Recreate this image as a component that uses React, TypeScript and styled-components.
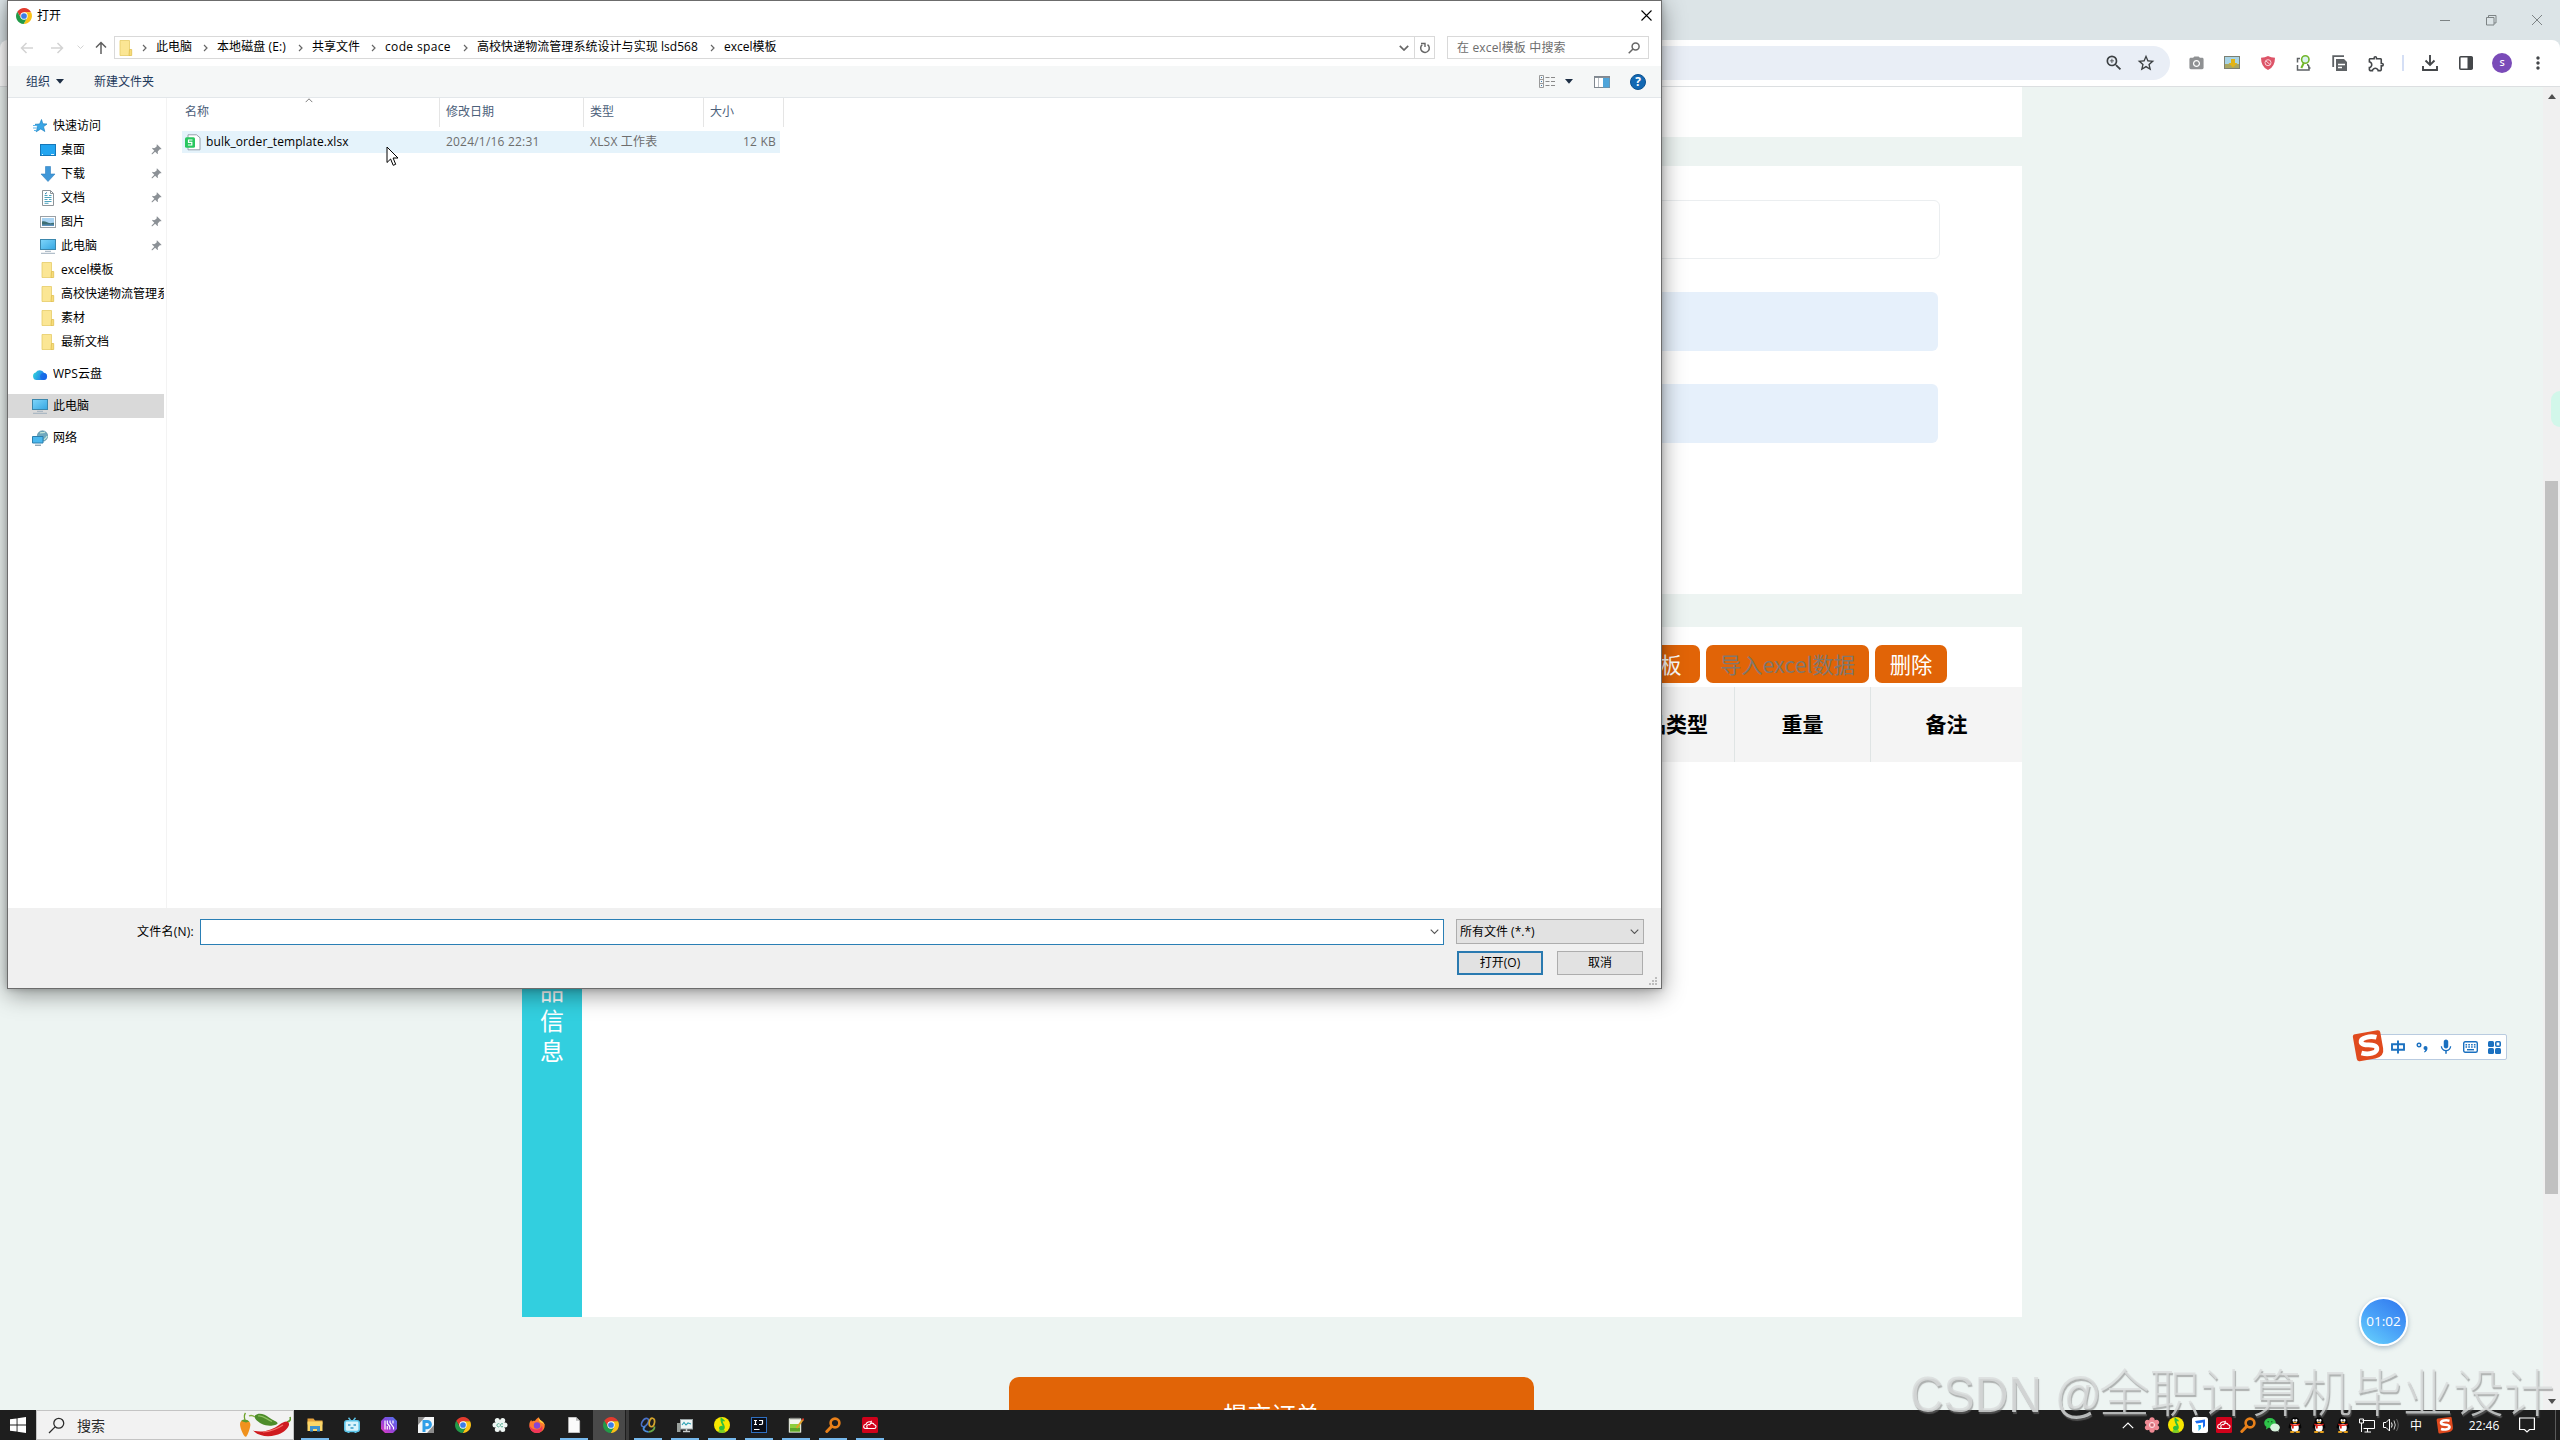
import React from "react";
import styled, { createGlobalStyle, css } from "styled-components";
import { MdZoomIn, MdStarBorder, MdPhotoCamera, MdOutlineExtension, MdMoreVert, MdMic, MdPushPin } from "react-icons/md";

const UI = `"Open Sans", "Noto Sans CJK SC", sans-serif`;
const CJK = `"Noto Sans CJK SC", sans-serif`;

const Global = createGlobalStyle`
  * { box-sizing: border-box; }
  html, body { margin: 0; padding: 0; overflow: hidden; }
  body { font-family: ${UI}; font-size: 12px; color: #000; }
  svg { display: block; flex: none; }
`;

const Desktop = styled.div`
  position: relative;
  width: 2560px;
  height: 1440px;
  overflow: hidden;
  display: flex;
  flex-direction: column;
  background: #edf4f2;
`;

/* ---------- browser ---------- */
const TabStrip = styled.header`
  height: 40px;
  flex: none;
  background: #dce4e7;
  display: flex;
  justify-content: flex-end;
  align-items: center;
  gap: 34px;
  padding-right: 17px;
`;
const ToolbarBack = styled.div`
  flex: none;
  background: #dce4e7;
`;
const BrowserToolbar = styled.div`
  height: 47px;
  background: #fff;
  border-bottom: 1px solid #dcdfe1;
  border-radius: 8px 8px 0 0;
  display: flex;
  align-items: center;
  padding: 0 4px 0 110px;
`;
const Omnibox = styled.div`
  flex: 1;
  height: 34px;
  border-radius: 17px;
  background: #e9eef6;
  display: flex;
  align-items: center;
  justify-content: flex-end;
  gap: 12px;
  padding-right: 14px;
  margin-right: 8px;
  color: #3c4043;
`;
const ToolSlot = styled.div`
  width: 36px;
  height: 36px;
  display: grid;
  place-items: center;
  color: #44474a;
`;
const ToolDivider = styled.div`
  width: 2px;
  height: 16px;
  margin: 0 8px;
  background: #d5dff5;
`;
const Avatar = styled.div`
  width: 20px;
  height: 20px;
  border-radius: 50%;
  background: #7a4bb8;
  color: #fff;
  font: 600 9.5px/20px "Open Sans", sans-serif;
  text-align: center;
`;

const Viewport = styled.main`
  flex: 1;
  min-height: 0;
  display: flex;
  overflow: hidden;
`;
const PageBody = styled.div`
  flex: 1;
  padding-left: 522px;
`;
const Card = styled.section<{ $h: number; $gap: number }>`
  width: 1500px;
  height: ${(p) => p.$h}px;
  margin-bottom: ${(p) => p.$gap}px;
  background: #fff;
`;
const FormCard = styled(Card)`
  padding: 34px 82px 0 0;
  display: flex;
  flex-direction: column;
  align-items: flex-end;
`;
const Field = styled.div<{ $filled?: boolean }>`
  width: 1240px;
  height: 59px;
  margin-bottom: 33px;
  border-radius: 6px;
  ${(p) =>
    p.$filled
      ? css`background: #e6f0fb; margin-right: 2px;`
      : css`border: 1px solid #ebeef0; background: #fff;`}
`;
const GoodsCard = styled(Card)`
  display: flex;
`;
const SideLabel = styled.div`
  width: 60px;
  background: #32cfdf;
  color: #fff;
  padding: 318px 18px 0;
  font: 24px/30px ${CJK};
`;
const Goods = styled.div`
  flex: 1;
  padding-top: 18px;
`;
const ActionRow = styled.div`
  display: flex;
  justify-content: flex-end;
  gap: 6px;
  padding-right: 75px;
  margin-bottom: 4px;
`;
const ActionButton = styled.div<{ $disabled?: boolean; $w: number }>`
  width: ${(p) => p.$w}px;
  height: 38px;
  border-radius: 7px;
  background: #e16407;
  color: ${(p) => (p.$disabled ? "#80776e" : "#fff")};
  font: 21.3px/38px ${CJK};
  text-align: center;
  white-space: nowrap;
`;
const GoodsHead = styled.div`
  display: grid;
  grid-template-columns: 1016px 137px 136px 151px;
  height: 75px;
  background: #f4f4f4;
`;
const HeadCell = styled.div`
  border-right: 1px solid #dfe4e4;
  font: 700 21px/73px ${CJK};
  text-align: center;
  &:last-child { border-right: 0; }
`;
const Submit = styled.div`
  width: 525px;
  height: 74px;
  margin: 60px 0 0 487px;
  border-radius: 10px;
  background: #e16407;
  color: #fff;
  font: 24px/74px ${CJK};
  text-align: center;
`;
const Scrollbar = styled.div`
  width: 17px;
  background: #f0f0f0;
  display: flex;
  flex-direction: column;
  align-items: center;
  padding: 7px 0 6px;
`;
const Thumb = styled.div`
  width: 13px;
  height: 713px;
  margin: 382px 0 auto;
  background: #c1c1c1;
`;

/* ---------- file dialog ---------- */
const Dialog = styled.div`
  position: absolute;
  left: 7px;
  top: 0;
  width: 1655px;
  height: 989px;
  border: 1px solid #6c6c6c;
  background: #fff;
  box-shadow: 0 5px 22px rgba(0, 0, 0, 0.42), 0 0 6px rgba(0, 0, 0, 0.2);
  display: flex;
  flex-direction: column;
  line-height: 16px;
`;
const TitleBar = styled.div`
  height: 35px;
  padding: 0 9px 6px 8px;
  display: flex;
  align-items: center;
  gap: 5px;
`;
const Spacer = styled.div`
  flex: 1;
`;
const NavRow = styled.div`
  height: 23px;
  display: flex;
  align-items: center;
  padding: 0 12px 0 12px;
`;
const NavIcons = styled.div`
  width: 94px;
  display: flex;
  align-items: center;
`;
const NavGap = styled.span<{ $w: number }>`
  width: ${(p) => p.$w}px;
`;
const AddressBox = styled.div`
  width: 1321px;
  height: 23px;
  border: 1px solid #d9d9d9;
  display: flex;
  align-items: center;
  padding-left: 3px;
`;
const Crumb = styled.span<{ $w: number; $ls: number }>`
  width: ${(p) => p.$w}px;
  padding-bottom: 1px;
  white-space: pre;
  letter-spacing: ${(p) => p.$ls}px;
`;
const CrumbArrow = styled.span<{ $first: boolean }>`
  width: 24px;
  margin-left: ${(p) => (p.$first ? -2 : 0)}px;
  display: flex;
  justify-content: center;
`;
const RefreshCell = styled.div`
  width: 20px;
  height: 21px;
  margin-left: 5px;
  border-left: 1px solid #d9d9d9;
  display: grid;
  place-items: center;
`;
const SearchBox = styled.div`
  width: 202px;
  height: 23px;
  margin-left: 12px;
  border: 1px solid #d9d9d9;
  display: flex;
  align-items: center;
  justify-content: space-between;
  padding: 0 8px 0 9px;
  color: #6d6d6d;
  letter-spacing: 0.15px;
`;
const CommandBar = styled.div`
  height: 32px;
  margin-top: 7px;
  background: #f5f7f7;
  border-bottom: 1px solid #e3e7ea;
  display: flex;
  align-items: center;
  padding: 0 15px 0 18px;
  color: #1e395b;
`;
const Command = styled.span<{ $w: number }>`
  width: ${(p) => p.$w}px;
  display: flex;
  align-items: center;
  gap: 6px;
`;
const CommandIcon = styled.span<{ $ml: number }>`
  margin-left: ${(p) => p.$ml}px;
`;
const DialogBody = styled.div`
  flex: 1;
  display: flex;
`;
const Tree = styled.nav`
  width: 159px;
  padding: 16px 2px 0 0;
  border-right: 1px solid #f3f3f3;
`;
const TreeItem = styled.div<{ $nested?: boolean; $selected?: boolean; $gap?: boolean }>`
  height: 24px;
  margin-top: ${(p) => (p.$gap ? 8 : 0)}px;
  padding-left: ${(p) => (p.$nested ? 32 : 24)}px;
  display: flex;
  align-items: center;
  gap: 5px;
  overflow: hidden;
  background: ${(p) => (p.$selected ? "#d9d9d9" : "transparent")};
`;
const TreeText = styled.span`
  flex: 1;
  min-width: 0;
  white-space: nowrap;
  overflow: hidden;
`;
const PinWrap = styled.span`
  transform: rotate(45deg);
  margin-right: 2px;
  color: #8c9196;
`;
const List = styled.div`
  padding-left: 11px;
`;
const ListHead = styled.div`
  display: grid;
  grid-template-columns: 262px 144px 120px 80px;
  height: 29px;
  margin-bottom: 4px;
  color: #4c607a;
`;
const ListHeadCell = styled.div<{ $first?: boolean }>`
  position: relative;
  padding: 6px 0 0 ${(p) => (p.$first ? 7 : 6)}px;
  border-right: 1px solid #e5e5e5;
`;
const SortMark = styled.div`
  position: absolute;
  left: 127px;
  top: 0;
  transform: scaleY(-1);
`;
const FileRow = styled.div`
  width: 598px;
  height: 22px;
  margin-left: 4px;
  display: grid;
  grid-template-columns: 21px 240px 144px 120px 66px;
  align-items: center;
  background: #e5f3fb;
  color: #6d6d6d;
  padding-left: 3px;
  letter-spacing: 0.2px;
`;
const ListWrap = styled.div`
  width: 606px;
`;
const FileName = styled.span`
  color: #000;
  letter-spacing: 0.1px;
`;
const SizeCell = styled.span`
  text-align: right;
`;
const Footer = styled.div`
  height: 80px;
  background: #f0f0f0;
  padding: 11px 17px 0 0;
  display: flex;
  flex-direction: column;
  gap: 6px;
`;
const FooterLine = styled.div`
  display: flex;
  align-items: flex-start;
  justify-content: flex-end;
`;
const FieldLabel = styled.label`
  width: 63px;
  line-height: 25px;
  letter-spacing: 0.25px;
  white-space: nowrap;
`;
const NameInput = styled.div`
  width: 1244px;
  height: 26px;
  border: 1px solid #2a7fb5;
  background: #fff;
  margin-right: 12px;
  display: flex;
  align-items: center;
  justify-content: flex-end;
  padding-right: 4px;
`;
const TypeSelect = styled.div`
  width: 188px;
  height: 25px;
  border: 1px solid #adadad;
  background: #e2e2e2;
  display: flex;
  align-items: center;
  justify-content: space-between;
  padding: 0 4px 0 3px;
`;
const DialogButton = styled.div<{ $primary?: boolean }>`
  width: 86px;
  height: 24px;
  border: ${(p) => (p.$primary ? "2px solid #2a7ab0" : "1px solid #adadad")};
  background: #e2e2e2;
  display: grid;
  place-items: center;
  margin-right: ${(p) => (p.$primary ? 14 : 1)}px;
`;
const Grip = styled.div`
  position: absolute;
  right: 3px;
  bottom: 2px;
`;
const Pointer = styled.div`
  position: absolute;
  left: 386px;
  top: 146px;
`;

/* ---------- floating widgets ---------- */
const ImeBar = styled.div`
  position: absolute;
  left: 2366px;
  top: 1034px;
  width: 141px;
  height: 26px;
  background: #fff;
  border: 1px solid #b9cbe0;
  border-radius: 2px;
  display: flex;
  align-items: center;
  padding-left: 19px;
  color: #1a70c0;
`;
const ImeCell = styled.div`
  width: 24px;
  display: grid;
  place-items: center;
`;
const ImeLogo = styled.div`
  position: absolute;
  left: 2352px;
  top: 1029px;
`;
const Timer = styled.div`
  position: absolute;
  left: 2359px;
  top: 1297px;
  width: 49px;
  height: 49px;
  border-radius: 50%;
  border: 2px solid #fff;
  background: linear-gradient(215deg, #3580f0 12%, #4aa2f8 52%, #66d0fc 95%);
  box-shadow: 0 2px 5px rgba(60, 90, 120, 0.35);
  color: #fff;
  font: 13.5px/45px "Open Sans", sans-serif;
  text-align: center;
`;
const EdgeTab = styled.div`
  position: absolute;
  left: 2551px;
  top: 391px;
  width: 20px;
  height: 36px;
  border-radius: 9px;
  background: #d2f7ea;
`;
const Watermark = styled.div`
  position: absolute;
  left: 1910px;
  top: 1359px;
  font: 50.6px/72px "Liberation Sans", "Noto Sans CJK SC", sans-serif;
  font-weight: 300;
  color: rgba(218, 220, 220, 0.8);
  text-shadow: 1px 2px 1px rgba(120, 120, 120, 0.55);
  white-space: pre;
  display: flex;
`;
const WmLatin = styled.span<{ $w: number; $sx: number }>`
  width: ${(p) => p.$w}px;
  transform: scaleX(${(p) => p.$sx});
  transform-origin: left;
`;

/* ---------- taskbar ---------- */
const Taskbar = styled.footer`
  flex: none;
  height: 30px;
  background: #1e1e1e;
  display: flex;
  align-items: stretch;
  color: #fff;
`;
const StartButton = styled.div`
  width: 36px;
  display: grid;
  place-items: center;
`;
const TaskSearch = styled.div`
  width: 258px;
  background: #f2f2f2;
  border: 1px solid #c4c4c4;
  display: flex;
  align-items: center;
  color: #2b2b2b;
  font-size: 14px;
  padding: 0 2px 0 11px;
  gap: 12px;
`;
const TaskItems = styled.div`
  display: flex;
  padding-left: 2px;
`;
const TaskItem = styled.div<{ $open?: boolean; $active?: boolean }>`
  width: 37px;
  padding-left: 11px;
  display: flex;
  align-items: center;
  ${(p) =>
    p.$active &&
    css`
      background: linear-gradient(#494949, #494949) 1px 0 / 32px 100% no-repeat,
        linear-gradient(#3b3b3b, #3b3b3b) 34px 0 / 3px 100% no-repeat;
    `}
  ${(p) =>
    p.$open &&
    css`
      background: linear-gradient(#76b9ed, #76b9ed) 5px 28px / 28px 2px no-repeat;
    `}
`;
const Tray = styled.div`
  display: flex;
  align-items: center;
`;
const TrayCell = styled.div<{ $w?: number }>`
  width: ${(p) => p.$w ?? 23.9}px;
  display: grid;
  place-items: center;
  white-space: nowrap;
`;
const Clock = styled(TrayCell)`
  font-size: 12px;
`;
const ShowDesktop = styled.div`
  width: 5px;
  margin-left: 9px;
  border-left: 1px solid #5a5a5a;
`;

/* ---------- icons ---------- */
const Chrome = ({ s = 16 }: { s?: number }) => (
  <svg width={s} height={s} viewBox="0 0 48 48">
    <path d="M24 13H45.3A24 24 0 0 0 3.8 11.06L14.5 29.5 24 24Z" fill="#e33b2e" />
    <path d="M45.3 13A24 24 0 0 1 22.9 47.95L33.5 29.5 24 24V13Z" fill="#fbc116" />
    <path d="M22.9 47.95A24 24 0 0 1 3.8 11.06L14.5 29.5 24 24 33.5 29.5Z" fill="#229a48" />
    <circle cx="24" cy="24" r="11" fill="#fff" />
    <circle cx="24" cy="24" r="8.6" fill="#3b7de8" />
  </svg>
);
const Folder = () => (
  <svg width="16" height="16" viewBox="0 0 16 16">
    <path d="M2 .5h9.5v15H2Z" fill="#fbe694" stroke="#e6cb67" strokeWidth=".8" />
    <path d="M11.500 9.500h2.200v6H11Z" fill="#f7dc7a" stroke="#dfbf50" strokeWidth=".8" />
  </svg>
);
const Monitor = () => (
  <svg width="16" height="16" viewBox="0 0 16 16">
    <defs>
      <linearGradient id="mon" x1="0" y1="0" x2="1" y2="1">
        <stop offset="0" stopColor="#7fd6fb" />
        <stop offset="1" stopColor="#35a6e2" />
      </linearGradient>
    </defs>
    <rect x=".5" y="1.500" width="15" height="10" fill="url(#mon)" stroke="#3b87ad" />
    <path d="M5 13.300h6M1 15.300h14" stroke="#9fb0bd" strokeWidth="1" />
  </svg>
);
const DesktopIcon = () => (
  <svg width="16" height="16" viewBox="0 0 16 16">
    <rect x=".5" y="2.500" width="15" height="11" fill="#22a5f0" stroke="#1677b8" />
    <path d="M2 12.500h1M11 12.500h3" stroke="#d8f2ff" />
  </svg>
);
const DownloadIcon = () => (
  <svg width="16" height="16" viewBox="0 0 16 16">
    <path d="M5.500.5h5v7.500h4.500L8 15.500 1 8h4.500Z" fill="#3f97d8" stroke="#2f80bf" strokeWidth=".6" />
  </svg>
);
const DocIcon = () => (
  <svg width="16" height="16" viewBox="0 0 16 16">
    <path d="M2.500.5h8l3 3v12h-11Z" fill="#fff" stroke="#8d9499" />
    <path d="M10.500.5v3h3" fill="none" stroke="#8d9499" />
    <path d="M4.500 5.500h3M9 5.500h2.500M4.500 7.500h7M4.500 9.500h3M9 9.500h2.500M4.500 11.500h7M4.500 13.300h4" stroke="#4fa3bd" />
    <path d="M5 4l2-1.500" stroke="#2a7fa8" />
  </svg>
);
const PictureIcon = () => (
  <svg width="16" height="16" viewBox="0 0 16 16">
    <rect x=".5" y="2.500" width="15" height="11" fill="#fff" stroke="#9aa0a5" />
    <rect x="2" y="4" width="12" height="8" fill="#a9d3f2" />
    <path d="M2 7.500c3-1 5 1 7 1.500s4-.5 5 0V12H2Z" fill="#3e6f74" />
    <path d="M2 10.500h12V12H2Z" fill="#5b90bb" />
  </svg>
);
const StarIcon = () => (
  <svg width="16" height="16" viewBox="0 0 16 16">
    <path d="M9.500 1.500l1.300 4.300 4.200.2-3.500 2.700 1.300 4.800-4-2.600-4.600 2.900 1.500-5L3 6.300l4.700-.3Z" fill="#39a6e6" stroke="#1d82c2" strokeWidth=".7" />
    <path d="M1 7.500h4M1 10h4M2 12.500h2.500" stroke="#5db5ea" />
  </svg>
);
const CloudIcon = () => (
  <svg width="16" height="16" viewBox="0 0 16 16">
    <defs>
      <linearGradient id="cl" x1="0" x2="1" y1="0" y2=".3">
        <stop offset="0" stopColor="#35dcd8" />
        <stop offset="1" stopColor="#1a6df0" />
      </linearGradient>
    </defs>
    <path d="M4.500 14a3.800 3.800 0 0 1-.8-7.400 4.700 4.700 0 0 1 8.300.1 3.700 3.700 0 0 1-.3 7.300Z" fill="url(#cl)" />
    <circle cx="11.600" cy="10.500" r="3.500" fill="#1464e6" opacity=".7" />
  </svg>
);
const NetworkIcon = () => (
  <svg width="16" height="16" viewBox="0 0 16 16">
    <circle cx="10.500" cy="6" r="5.200" fill="#6fa9bf" stroke="#4d8598" strokeWidth=".6" />
    <path d="M8 3c2-1 3 .5 5-1M12 10c1-2 3-2 3-4" stroke="#c7e8d8" strokeWidth="1.200" fill="none" />
    <path d="M.5 6.500h10.500v6.500H.5Z" fill="#4bb8ee" stroke="#2b7fad" />
    <path d="M3 15.200h6" stroke="#5f8296" />
  </svg>
);
const SheetIcon = () => (
  <svg width="16" height="17" viewBox="0 0 16 17">
    <path d="M3 .8h8.500l3.500 3v12H3Z" fill="#fff" stroke="#8b96a0" strokeWidth=".9" />
    <rect x="0" y="3.300" width="10" height="10.500" rx="1.500" fill="#29c75f" />
    <path d="M7.500 6H3.500v2.400h3.300v2.600H2.900" fill="none" stroke="#fff" strokeWidth="1.200" />
  </svg>
);
const Turn = styled.svg<{ $deg: number }>`
  transform: rotate(${(p) => p.$deg}deg);
`;
const Arrow = ({ deg, c }: { deg: number; c: string }) => (
  <Turn $deg={deg} width="14" height="14" viewBox="0 0 14 14">
    <path d="M13 7H1.500M6.500 2L1.500 7l5 5" fill="none" stroke={c} strokeWidth="1.500" />
  </Turn>
);
const Chevron = ({ w = 9, c = "#555", sw = 1.2 }: { w?: number; c?: string; sw?: number }) => (
  <svg width={w} height={w * 0.6} viewBox="0 0 10 6">
    <path d="M.8.8L5 5 9.200.8" fill="none" stroke={c} strokeWidth={sw} />
  </svg>
);
const RightMark = () => (
  <svg width="5" height="8" viewBox="0 0 5 8">
    <path d="M1 1l3 3-3 3" fill="none" stroke="#666" strokeWidth="1.200" />
  </svg>
);
const Down = ({ w = 8, c = "#1e2f45" }: { w?: number; c?: string }) => (
  <svg width={w} height={w * 0.6} viewBox="0 0 10 6"><path d="M0 0h10L5 6Z" fill={c} /></svg>
);
const Refresh = () => (
  <svg width="12" height="12" viewBox="0 0 12 12">
    <path d="M3.200 2.800A4.300 4.300 0 1 0 8.500 2.600" fill="none" stroke="#666" strokeWidth="1.500" />
    <path d="M2 1.500h4v3.500" fill="none" stroke="#666" strokeWidth="1.400" />
  </svg>
);
const Magnifier = ({ s = 12, c = "#666", sw = 1.5 }: { s?: number; c?: string; sw?: number }) => (
  <svg width={s} height={s} viewBox="0 0 12 12">
    <circle cx="7.600" cy="4.400" r="3.500" fill="none" stroke={c} strokeWidth={sw} />
    <path d="M5 7L.7 11.300" stroke={c} strokeWidth={sw} />
  </svg>
);
const ViewIcon = () => (
  <svg width="16" height="13" viewBox="0 0 16 13">
    <path d="M.5.5h4v12h-4ZM.5 4.500h4M.5 8.500h4" fill="none" stroke="#9a9a9a" />
    <path d="M2 2.500h1M2 6.500h1M2 10.500h1" stroke="#3c78a8" />
    <path d="M6.500 2.500h4M12 2.500h4M6.500 6.500h4M12 6.500h4M6.500 10.500h4M12 10.500h4" stroke="#8a8a8a" />
  </svg>
);
const PaneIcon = () => (
  <svg width="16" height="12" viewBox="0 0 16 12">
    <rect x=".5" y=".5" width="15" height="11" fill="#fff" stroke="#808890" />
    <path d="M.5 1.200h15" stroke="#808890" strokeWidth="1.500" />
    <rect x="9" y="2" width="6.500" height="9.500" fill="#4fa5da" />
    <path d="M4.500 2v9" stroke="#b8bec4" />
  </svg>
);
const Help = styled.div`
  width: 16px;
  height: 16px;
  margin-left: 20px;
  border-radius: 50%;
  background: #1268b3;
  border: 1px solid #0c5290;
  color: #fff;
  font: 700 12px/14px "Open Sans", sans-serif;
  text-align: center;
`;
const CloudLogo = ({ s = 16 }: { s?: number }) => (
  <svg width={s} height={s} viewBox="0 0 16 16">
    <rect width="16" height="16" rx="1.500" fill="#d0021b" />
    <path d="M3.500 11.500a2 2 0 0 1 .4-4 3.600 3.600 0 0 1 5.600-2M6 11.500h6a1.900 1.900 0 0 0 .2-3.800 2.400 2.400 0 0 0-4.500 0A2 2 0 0 0 6 11.500H3.500M8.500 5l1.200-1" fill="none" stroke="#fff" strokeWidth="1.100" />
  </svg>
);
const MusicLogo = () => (
  <svg width="16" height="16" viewBox="0 0 16 16">
    <circle cx="8" cy="8" r="8" fill="#f7e600" />
    <path d="M7 0c1 2 4 2.500 4 4.500-.8-.5-1.800-.4-2.400 0 .6 2 2.600 4 2.200 6.500C10 14 5 14 5 11c0-2 2.500-3 3.800-1.800C7.500 6.500 5.500 3 7 0Z" fill="#2fbf3e" />
    <path d="M8 16c-1.500 0-3-.5-4-1.300L8 9.500l3.600 5.600Z" fill="#2fbf3e" opacity=".6" />
  </svg>
);
const OrangeSearch = () => (
  <svg width="16" height="16" viewBox="0 0 16 16">
    <circle cx="10" cy="6" r="4.400" fill="none" stroke="#e8801a" strokeWidth="2.600" />
    <path d="M6.800 9.200L1.800 14.500" stroke="#e8801a" strokeWidth="3" strokeLinecap="round" />
  </svg>
);
const Penguin = () => (
  <svg width="16" height="16" viewBox="0 0 16 16">
    <path d="M8 .3c3 0 4.300 2 4.300 4.700 1 1.500 2.400 4 2 6-.2.800-1 .5-1.500-.5-.2 1.500-.8 2.500-1.700 3.300H4.900C4 13 3.400 12 3.200 10.500c-.5 1-1.300 1.300-1.500.5-.4-2 1-4.500 2-6C3.700 2.300 5 .3 8 .3Z" fill="#050505" />
    <ellipse cx="8" cy="10.800" rx="3.800" ry="4" fill="#fff" />
    <ellipse cx="6.700" cy="3.400" rx="1.100" ry="1.400" fill="#fff" /><ellipse cx="9.300" cy="3.400" rx="1.100" ry="1.400" fill="#fff" />
    <ellipse cx="8" cy="5.400" rx="2" ry=".6" fill="#f6a91b" />
    <path d="M3.500 6.500c3 1.400 6 1.400 9 0l.2 1.600c-2 .9-4.200 1.100-6 1v2.300H5V8.800l-1.700-.7Z" fill="#e2231a" />
    <ellipse cx="5.200" cy="15" rx="2.400" ry=".9" fill="#f6a91b" /><ellipse cx="10.800" cy="15" rx="2.400" ry=".9" fill="#f6a91b" />
  </svg>
);
const SLogo = ({ s, tilt = 0 }: { s: number; tilt?: number }) => (
  <svg width={s} height={s} viewBox="0 0 32 32">
    <g transform={`rotate(${tilt} 16 16)`}>
      <path d="M5 3h22q2.500 0 2.500 2.500V21q0 8-9 8.500H5Q2.500 29.500 2.500 27V5.500Q2.500 3 5 3Z" fill="#e04a1e" />
      <path d="M25 9.500C19 7 9.500 7 9.500 11.500c0 5 14 3 14 8.500 0 4.800-9 5-15.500 2" fill="none" stroke="#fff" strokeWidth="4.600" />
    </g>
  </svg>
);

const TASKS: { open?: boolean; active?: boolean; icon: React.ReactNode }[] = [
  {
    open: true,
    icon: (
      <svg width="16" height="16" viewBox="0 0 16 16">
        <path d="M.5 1.500h6l1.500 2h7.500v4H.5Z" fill="#e8a33d" />
        <path d="M.5 4.500h15v9.500H.5Z" fill="#fbd669" />
        <path d="M3 14.500V9h10v5.500h-3V12H6v2.500Z" fill="#3f93cf" />
      </svg>
    ),
  },
  {
    icon: (
      <svg width="16" height="16" viewBox="0 0 16 16">
        <path d="M4.500 .8l2 2.500M11.500 .8L9.500 3.300" stroke="#5cc4e8" strokeWidth="1.400" />
        <rect x=".8" y="3.800" width="14.400" height="10.700" rx="2.200" fill="#d9f4fc" stroke="#5cc4e8" strokeWidth="1.600" />
        <path d="M4 8h2.500M9.500 8H12M6.500 11h3" stroke="#3a9cc8" strokeWidth="1.300" fill="none" />
        <path d="M3.500 15.300h2M10.500 15.300h2" stroke="#5cc4e8" strokeWidth="1.200" />
      </svg>
    ),
  },
  {
    icon: (
      <svg width="16" height="16" viewBox="0 0 16 16">
        <defs>
          <linearGradient id="pp" x1="1" y1="0" x2="0" y2="1">
            <stop offset="0" stopColor="#4a78f0" /><stop offset=".5" stopColor="#8a45dc" /><stop offset="1" stopColor="#e83cc0" />
          </linearGradient>
        </defs>
        <path d="M4 0h8l4 4v8l-4 4H4l-4-4V4Z" fill="url(#pp)" />
        <path d="M4 3.500v9M6.300 3.500v3l2.500 3v3M9 3.500v2l3.500 5v2M12 3.500v3M6.300 9v3.500" stroke="#fff" strokeWidth="1.200" fill="none" />
      </svg>
    ),
  },
  {
    icon: (
      <svg width="16" height="16" viewBox="0 0 16 16">
        <rect width="16" height="16" fill="#f4f6f7" />
        <path d="M0 0h7L0 8ZM16 8v8H9Z" fill="#8c8c8c" />
        <path d="M6 15V4.500h3.300a3 3 0 0 1 0 6.200H6.500" fill="none" stroke="#2f9fe8" strokeWidth="3" />
      </svg>
    ),
  },
  { icon: <Chrome /> },
  {
    icon: (
      <svg width="16" height="16" viewBox="0 0 16 16">
        <g fill="#eef6f3">
          <circle cx="8" cy="8" r="5" /><circle cx="3" cy="8" r="2.500" /><circle cx="13" cy="8" r="2.500" />
          <circle cx="5.300" cy="3.500" r="2.500" /><circle cx="10.700" cy="3.500" r="2.500" /><circle cx="5.300" cy="12.500" r="2.500" /><circle cx="10.700" cy="12.500" r="2.500" />
        </g>
        <path d="M7.500 7a1.600 1.600 0 1 0 0 2.500M11 7a1.600 1.600 0 1 0 0 2.500" fill="none" stroke="#57b096" strokeWidth="1" />
      </svg>
    ),
  },
  {
    icon: (
      <svg width="16" height="16" viewBox="0 0 16 16">
        <path d="M8 16A7.700 7.700 0 0 1 .3 8c0-2.500 1-4 2-5l.6 1.500C4 3.500 5 3.500 6 4c.5-1.500 2-3 4-3.800 0 1.500.5 2.300 2 3.300 2.500 1.500 3.800 3.500 3.700 5.500C15.500 13 12 16 8 16Z" fill="#ff7b2e" />
        <path d="M10 .2c0 1.500.5 2.300 2 3.300 2.500 1.500 3.800 3.500 3.700 5.500-.3-2-1.700-3-2.700-3C10 5 9 3 10 .2Z" fill="#ffd53e" />
        <path d="M8 16A7.700 7.700 0 0 1 .3 8c2 4 5 5 8 4.500s4-2 4.500-4c1.500 2 1 7.500-4.800 7.500Z" fill="#f0355a" />
        <circle cx="8" cy="8.500" r="3.200" fill="#8646d6" />
      </svg>
    ),
  },
  {
    open: true,
    icon: (
      <svg width="16" height="16" viewBox="0 0 16 16">
        <path d="M2.500.3H10l3.700 3.500v12H2.500Z" fill="#fafafa" stroke="#c9c9c9" strokeWidth=".5" />
        <path d="M10 .3v3.500h3.700Z" fill="#b9b9b9" />
      </svg>
    ),
  },
  { active: true, icon: <Chrome /> },
  {
    open: true,
    icon: (
      <svg width="16" height="16" viewBox="0 0 16 16">
        <ellipse cx="5" cy="5.500" rx="2.800" ry="4.700" transform="rotate(35 5 5.500)" fill="none" stroke="#4a72c8" strokeWidth="1.700" />
        <ellipse cx="11.800" cy="5.500" rx="2.600" ry="4.300" transform="rotate(10 12 6)" fill="none" stroke="#d3a32c" strokeWidth="1.700" />
        <path d="M14.500 9.500c.3 3-2.500 5.300-6 5.300" fill="none" stroke="#6aa84a" strokeWidth="1.800" />
        <path d="M5 9.500c-3 2.500-1 5.300 3.500 5.300" fill="none" stroke="#4c8fdc" strokeWidth="1.800" />
      </svg>
    ),
  },
  {
    open: true,
    icon: (
      <svg width="16" height="16" viewBox="0 0 16 16">
        <rect x="0" y="6" width="3.500" height="9" fill="#9aa09c" />
        <rect x="3.500" y="2.500" width="12" height="9.500" fill="#eff5f5" stroke="#9aa4a6" />
        <path d="M5 8l2-2.500 2 2.500 2-2 3 1" fill="none" stroke="#2fa3b5" strokeWidth="1.100" />
        <path d="M9.500 12v2M6 14.500h7" stroke="#c7cccc" strokeWidth="1.500" />
      </svg>
    ),
  },
  { open: true, icon: <MusicLogo /> },
  {
    open: true,
    icon: (
      <svg width="16" height="16" viewBox="0 0 16 16">
        <rect x=".5" y=".5" width="15" height="15" fill="#0a0d16" stroke="#2f6fc0" />
        <path d="M3 3.500h3M4.500 3.500v4M3 7.500h3M8 3.500h3.500v3q0 1-1.500 1H8M3 12.500h5.500" stroke="#fff" strokeWidth="1.200" fill="none" />
      </svg>
    ),
  },
  {
    open: true,
    icon: (
      <svg width="16" height="16" viewBox="0 0 16 16">
        <path d="M1 1.500h12v14H1Z" fill="#f4f6ee" stroke="#a9b1a0" strokeWidth=".6" />
        <path d="M2 7h10v7.500H2Z" fill="#8fce3c" /><path d="M2 11h10v3.500H2Z" fill="#5ca52a" />
        <path d="M2.500 1.500h10" stroke="#777" strokeWidth="1.800" strokeDasharray="1 1" />
        <path d="M15 2.500L8.500 11" stroke="#e0a02a" strokeWidth="2" /><path d="M15.700 1.500l-1.200 1.800" stroke="#d23c2a" strokeWidth="2" />
      </svg>
    ),
  },
  { open: true, icon: <OrangeSearch /> },
  { open: true, icon: <CloudLogo /> },
];

const Peppers = () => (
  <svg width="52" height="26" viewBox="0 0 52 26">
    <path d="M6 8C5 5 5 3 6.500 1" stroke="#6fa32c" strokeWidth="1.300" fill="none" />
    <path d="M1 12c0-3 2.500-4.500 5.500-4S11.800 10 11.300 13.500 9 22.500 7.300 24.500 1 17 1 12Z" fill="#f0921e" />
    <path d="M2 9q4-3 8.500.5L7 10.500Z" fill="#5f9a2b" />
    <path d="M16 5c-2-1.500-4-2-6-1" stroke="#7fae3a" strokeWidth="1.300" fill="none" />
    <path d="M16 3.500c4-3.500 10-1 14 2s9 4 8.500 6-10 3.500-15.500.5S15 6.500 16 3.500Z" fill="#4d8c2a" />
    <path d="M19 4c5-1 8 3 14 5.500" stroke="#8fc162" strokeWidth="1.200" fill="none" />
    <path d="M48 10c3-.5 4-2.500 3-5" stroke="#5f9a2b" strokeWidth="1.600" fill="none" />
    <path d="M14 18.500c10 3 20-1 26-5.500 4-3 8-4.500 9.500-2.500 2 3-2 8-8 11s-20 5-27.500-3Z" fill="#cf1b1f" />
    <path d="M24 20c8-.5 14-3 20-7" stroke="#f3706a" strokeWidth="1.200" fill="none" />
  </svg>
);

const TREE: { t: string; i: React.ReactNode; nested?: boolean; pin?: boolean; gap?: boolean; sel?: boolean }[] = [
  { t: "快速访问", i: <StarIcon /> },
  { t: "桌面", i: <DesktopIcon />, nested: true, pin: true },
  { t: "下载", i: <DownloadIcon />, nested: true, pin: true },
  { t: "文档", i: <DocIcon />, nested: true, pin: true },
  { t: "图片", i: <PictureIcon />, nested: true, pin: true },
  { t: "此电脑", i: <Monitor />, nested: true, pin: true },
  { t: "excel模板", i: <Folder />, nested: true },
  { t: "高校快递物流管理系", i: <Folder />, nested: true },
  { t: "素材", i: <Folder />, nested: true },
  { t: "最新文档", i: <Folder />, nested: true },
  { t: "WPS云盘", i: <CloudIcon />, gap: true },
  { t: "此电脑", i: <Monitor />, gap: true, sel: true },
  { t: "网络", i: <NetworkIcon />, gap: true },
];

/* label, column width, letter spacing */
const CRUMBS: [string, number, number][] = [
  ["此电脑", 37, 0],
  ["本地磁盘 (E:)", 71, 0.1],
  ["共享文件", 49, 0],
  ["code space", 68, 0.35],
  ["高校快递物流管理系统设计与实现 lsd568", 223, 0.05],
  ["excel模板", 54, 0],
];

const FileDialog = () => (
  <Dialog>
    <TitleBar>
      <Chrome />
      <span>打开</span>
      <Spacer />
      <svg width="11" height="11" viewBox="0 0 11 11"><path d="M.5.5l10 10M10.500.5l-10 10" stroke="#000" strokeWidth="1.100" /></svg>
    </TitleBar>
    <NavRow>
      <NavIcons>
        <Arrow deg={0} c="#d3d3d3" />
        <NavGap $w={16} />
        <Arrow deg={180} c="#d3d3d3" />
        <NavGap $w={13} />
        <Chevron w={7} c="#c9c9c9" />
        <NavGap $w={10} />
        <Arrow deg={90} c="#5f5f5f" />
      </NavIcons>
      <AddressBox>
        <Folder />
        {CRUMBS.map(([t, w, ls], k) => (
          <React.Fragment key={t}>
            <CrumbArrow $first={k === 0}><RightMark /></CrumbArrow>
            <Crumb $w={w} $ls={ls}>{t}</Crumb>
          </React.Fragment>
        ))}
        <Spacer />
        <Chevron w={10} c="#666" sw={1.7} />
        <RefreshCell><Refresh /></RefreshCell>
      </AddressBox>
      <SearchBox>
        <span>在 excel模板 中搜索</span>
        <Magnifier />
      </SearchBox>
    </NavRow>
    <CommandBar>
      <Command $w={68}>组织<Down /></Command>
      <Command $w={80}>新建文件夹</Command>
      <Spacer />
      <ViewIcon />
      <CommandIcon $ml={10}><Down /></CommandIcon>
      <CommandIcon $ml={21}><PaneIcon /></CommandIcon>
      <Help>?</Help>
    </CommandBar>
    <DialogBody>
      <Tree>
        {TREE.map((n, k) => (
          <TreeItem key={k} $nested={n.nested} $gap={n.gap} $selected={n.sel}>
            {n.i}
            <TreeText>{n.t}</TreeText>
            {n.pin && <PinWrap><MdPushPin size={13} /></PinWrap>}
          </TreeItem>
        ))}
      </Tree>
      <List>
        <ListWrap>
          <ListHead>
            <ListHeadCell $first>
              <SortMark><Chevron w={8} c="#777" /></SortMark>
              名称
            </ListHeadCell>
            <ListHeadCell>修改日期</ListHeadCell>
            <ListHeadCell>类型</ListHeadCell>
            <ListHeadCell>大小</ListHeadCell>
          </ListHead>
          <FileRow>
            <SheetIcon />
            <FileName>bulk_order_template.xlsx</FileName>
            <span>2024/1/16 22:31</span>
            <span>XLSX 工作表</span>
            <SizeCell>12 KB</SizeCell>
          </FileRow>
        </ListWrap>
      </List>
    </DialogBody>
    <Footer>
      <FooterLine>
        <FieldLabel>文件名(N):</FieldLabel>
        <NameInput><Chevron w={9} /></NameInput>
        <TypeSelect><span>所有文件 (*.*)</span><Chevron w={9} /></TypeSelect>
      </FooterLine>
      <FooterLine>
        <DialogButton $primary>打开(O)</DialogButton>
        <DialogButton>取消</DialogButton>
      </FooterLine>
    </Footer>
    <Grip>
      <svg width="9" height="9" viewBox="0 0 9 9"><path d="M6 0h2v2H6zM3 3h2v2H3zM6 3h2v2H6zM0 6h2v2H0zM3 6h2v2H3zM6 6h2v2H6z" fill="#bdbdbd" /></svg>
    </Grip>
  </Dialog>
);

export default function App() {
  return (
    <Desktop>
      <Global />
      <TabStrip>
        <svg width="12" height="12" viewBox="0 0 12 12"><path d="M1 6.500h10" stroke="#7d8385" /></svg>
        <svg width="12" height="12" viewBox="0 0 12 12"><path d="M1.500 3.500h7.500V11H1.500ZM3.500 3.500v-2H11V9H9" fill="none" stroke="#7d8385" /></svg>
        <svg width="12" height="12" viewBox="0 0 12 12"><path d="M1 1l10 10M11 1L1 11" stroke="#7d8385" /></svg>
      </TabStrip>
      <ToolbarBack>
        <BrowserToolbar>
          <Omnibox>
            <MdZoomIn size={20} />
            <MdStarBorder size={20} />
          </Omnibox>
          <ToolSlot><MdPhotoCamera size={17} color="#8f9193" /></ToolSlot>
          <ToolSlot>
            <svg width="16" height="14" viewBox="0 0 16 14">
              <rect x=".5" y=".5" width="15" height="12" fill="#a8d4e6" stroke="#7c8072" />
              <path d="M1 8h14v4H1Z" fill="#a9a763" />
              <path d="M7 3h4v4h2.500L9 11.500 4.500 7H7Z" fill="#e2b416" />
            </svg>
          </ToolSlot>
          <ToolSlot>
            <svg width="14" height="14" viewBox="0 0 14 14">
              <path d="M7 0q3 1.600 7 1.700Q14 11 7 14 0 11 0 1.700 4 1.600 7 0Z" fill="#dd5468" />
              <circle cx="7" cy="6.700" r="3" fill="none" stroke="#fbdde1" strokeWidth=".9" /><path d="M5 5l4 3.500" stroke="#fbdde1" strokeWidth=".9" />
            </svg>
          </ToolSlot>
          <ToolSlot>
            <svg width="16" height="16" viewBox="0 0 16 16">
              <path d="M4 3.500H1.500V7.500M1.500 10V15h11.500v-2h1.500" fill="none" stroke="#5e6265" strokeWidth="1.500" />
              <circle cx="9.300" cy="4.500" r="3.700" fill="#d9f3ee" stroke="#73b62c" strokeWidth="1.600" />
              <path d="M7.800 8L5.300 13" stroke="#73b62c" strokeWidth="2" />
              <path d="M11 9.500q2 .3 2 3.500" fill="none" stroke="#5e6265" strokeWidth="1.500" />
            </svg>
          </ToolSlot>
          <ToolSlot>
            <svg width="16" height="16" viewBox="0 0 16 16">
              <path d="M1.200 12V1.200H12" fill="none" stroke="#5e6265" strokeWidth="1.800" />
              <path d="M4 4h8l3 3v9H4Z" fill="#5e6265" /><path d="M6 9.500h7M6 12.500h4" stroke="#fff" strokeWidth="1.300" />
            </svg>
          </ToolSlot>
          <ToolSlot><MdOutlineExtension size={19} /></ToolSlot>
          <ToolDivider />
          <ToolSlot>
            <svg width="16" height="16" viewBox="0 0 16 16"><path d="M8 0v9.500M3.500 5.500L8 10l4.500-4.500M1 11v4h14v-4" fill="none" stroke="#44474a" strokeWidth="1.900" /></svg>
          </ToolSlot>
          <ToolSlot>
            <svg width="14" height="14" viewBox="0 0 14 14"><rect x=".8" y=".8" width="12.400" height="12.400" rx="1" fill="none" stroke="#44474a" strokeWidth="1.600" /><path d="M8.500 1h5v12h-5Z" fill="#44474a" /></svg>
          </ToolSlot>
          <ToolSlot><Avatar>S</Avatar></ToolSlot>
          <ToolSlot><MdMoreVert size={20} /></ToolSlot>
        </BrowserToolbar>
      </ToolbarBack>
      <Viewport>
        <PageBody>
          <Card $h={50} $gap={29} />
          <FormCard $h={428} $gap={33}>
            <Field />
            <Field $filled />
            <Field $filled />
          </FormCard>
          <GoodsCard $h={690} $gap={0}>
            <SideLabel>物品信息</SideLabel>
            <Goods>
              <ActionRow>
                <ActionButton $w={172}>下载excel模板</ActionButton>
                <ActionButton $w={163} $disabled>导入excel数据</ActionButton>
                <ActionButton $w={72}>删除</ActionButton>
              </ActionRow>
              <GoodsHead>
                <HeadCell />
                <HeadCell>物品类型</HeadCell>
                <HeadCell>重量</HeadCell>
                <HeadCell>备注</HeadCell>
              </GoodsHead>
            </Goods>
          </GoodsCard>
          <Submit>提交订单</Submit>
        </PageBody>
        <Scrollbar>
          <svg width="8" height="5" viewBox="0 0 8 5"><path d="M0 5h8L4 0Z" fill="#505050" /></svg>
          <Thumb />
          <svg width="8" height="5" viewBox="0 0 8 5"><path d="M0 0h8L4 5Z" fill="#505050" /></svg>
        </Scrollbar>
      </Viewport>
      <Taskbar>
        <StartButton>
          <svg width="16" height="16" viewBox="0 0 16 16"><path d="M0 2.300L6.600 1.400v6.200H0ZM7.500 1.300L16 0v7.600H7.500ZM0 8.400h6.600v6.200L0 13.700ZM7.500 8.400H16V16l-8.500-1.300Z" fill="#fff" /></svg>
        </StartButton>
        <TaskSearch>
          <Magnifier s={17} c="#2b2b2b" sw={0.9} />
          <span>搜索</span>
          <Spacer />
          <Peppers />
        </TaskSearch>
        <TaskItems>
          {TASKS.map((t, k) => (
            <TaskItem key={k} $open={t.open} $active={t.active}>{t.icon}</TaskItem>
          ))}
        </TaskItems>
        <Spacer />
        <Tray>
          <TrayCell><svg width="12" height="7" viewBox="0 0 12 7"><path d="M.8 6.200L6 1l5.200 5.200" fill="none" stroke="#fff" strokeWidth="1.200" /></svg></TrayCell>
          <TrayCell>
            <svg width="16" height="16" viewBox="0 0 16 16">
              <g fill="#ee8a94">
                {[0, 60, 120, 180, 240, 300].map((a) => <ellipse key={a} cx="8" cy="3.800" rx="2.800" ry="3.600" transform={`rotate(${a} 8 8)`} />)}
              </g>
              <circle cx="8" cy="8" r="2.600" fill="none" stroke="#f8dfe2" strokeWidth="1" />
            </svg>
          </TrayCell>
          <TrayCell><MusicLogo /></TrayCell>
          <TrayCell>
            <svg width="16" height="16" viewBox="0 0 16 16"><rect width="16" height="16" rx="2.500" fill="#fff" /><path d="M3 4l10-1.500V9l-2 2V5.500L4.500 6.500Z" fill="#1a6cf0" /><path d="M6 8h3v3.500L6.500 14V10Z" fill="#19b6f5" /></svg>
          </TrayCell>
          <TrayCell><CloudLogo /></TrayCell>
          <TrayCell><OrangeSearch /></TrayCell>
          <TrayCell>
            <svg width="16" height="16" viewBox="0 0 16 16"><ellipse cx="6" cy="6" rx="5.800" ry="5" fill="#2fc34a" /><path d="M2.500 9.500L2 12.500l3-2Z" fill="#2fc34a" /><ellipse cx="11" cy="10.500" rx="4.800" ry="4" fill="#d7f2dc" /><path d="M13 13.500l1.500 1.800-.2-3Z" fill="#d7f2dc" /><circle cx="4.200" cy="4.800" r=".8" fill="#155c22" /><circle cx="7.800" cy="4.800" r=".8" fill="#155c22" /></svg>
          </TrayCell>
          <TrayCell><Penguin /></TrayCell>
          <TrayCell><Penguin /></TrayCell>
          <TrayCell><Penguin /></TrayCell>
          <TrayCell>
            <svg width="16" height="15" viewBox="0 0 16 15"><path d="M3.500 2.500h12v8H4.500M8.500 10.500v3.500M5.500 14h6.500M.5 1h4v4h-4ZM2.500 5v9" fill="none" stroke="#fff" /></svg>
          </TrayCell>
          <TrayCell>
            <svg width="16" height="14" viewBox="0 0 16 14"><path d="M.5 4.500h2.500L6.500 1v12L3 9.500H.5Z" fill="none" stroke="#fff" /><path d="M8.500 4.500q1.300 2.500 0 5" fill="none" stroke="#fff" /><path d="M11 2.500q2.500 4.500 0 9" fill="none" stroke="#ccc" /><path d="M13.500 1q3.500 6 0 12" fill="none" stroke="#666" /></svg>
          </TrayCell>
          <TrayCell $w={26}>
            <span>中</span>
          </TrayCell>
          <TrayCell $w={31}><SLogo s={18} tilt={-8} /></TrayCell>
          <Clock $w={48}>22:46</Clock>
          <TrayCell $w={38}>
            <svg width="16" height="17" viewBox="0 0 16 17"><path d="M.6 1h14.800v11.500h-4.900L8 15l-2.500-2.500H.6Z" fill="none" stroke="#fff" strokeWidth="1.200" /></svg>
          </TrayCell>
        </Tray>
        <ShowDesktop />
      </Taskbar>

      <FileDialog />
      <Pointer>
        <svg width="13" height="21" viewBox="0 0 13 21"><path d="M1 1v15.500l3.600-3.500 2.600 6.300 2.500-1L7.100 12h4.900Z" fill="#fff" stroke="#000" /></svg>
      </Pointer>
      <EdgeTab />
      <ImeBar>
        <ImeCell>
          <svg width="14" height="14" viewBox="0 0 14 14"><path d="M1 4.200h12v5.600H1ZM7 .5v13" fill="none" stroke="currentColor" strokeWidth="1.900" /></svg>
        </ImeCell>
        <ImeCell>
          <svg width="12" height="14" viewBox="0 0 12 14"><circle cx="3" cy="5" r="1.800" fill="none" stroke="currentColor" strokeWidth="1.400" /><path d="M7.500 8a2 2 0 0 1 4 0q0 3-3 4.500l-.5-.8q1.200-.8 1.300-1.700A1.900 1.900 0 0 1 7.500 8Z" fill="currentColor" /></svg>
        </ImeCell>
        <ImeCell><MdMic size={18} /></ImeCell>
        <ImeCell>
          <svg width="15" height="12" viewBox="0 0 15 12"><rect x=".7" y=".7" width="13.600" height="10.600" rx="1.500" fill="none" stroke="currentColor" strokeWidth="1.400" /><path d="M2.500 3.700h10M2.500 6h10" stroke="currentColor" strokeWidth="1.500" strokeDasharray="1.600 1.200" /><path d="M4 8.700h7" stroke="currentColor" strokeWidth="1.400" /></svg>
        </ImeCell>
        <ImeCell>
          <svg width="13" height="13" viewBox="0 0 13 13"><rect width="6" height="6" rx="1.500" fill="currentColor" /><rect y="7" width="6" height="6" rx="1.500" fill="currentColor" /><rect x="7" y="7" width="6" height="6" rx="1.500" fill="currentColor" /><rect x="7.800" y=".8" width="4.400" height="4.400" rx="1" fill="none" stroke="currentColor" strokeWidth="1.600" /></svg>
        </ImeCell>
      </ImeBar>
      <ImeLogo><SLogo s={33} tilt={-10} /></ImeLogo>
      <Timer>01:02</Timer>
      <Watermark>
        <WmLatin $w={189} $sx={0.92}>CSDN @</WmLatin>
        <span>全职计算机毕业设计</span>
      </Watermark>
    </Desktop>
  );
}
